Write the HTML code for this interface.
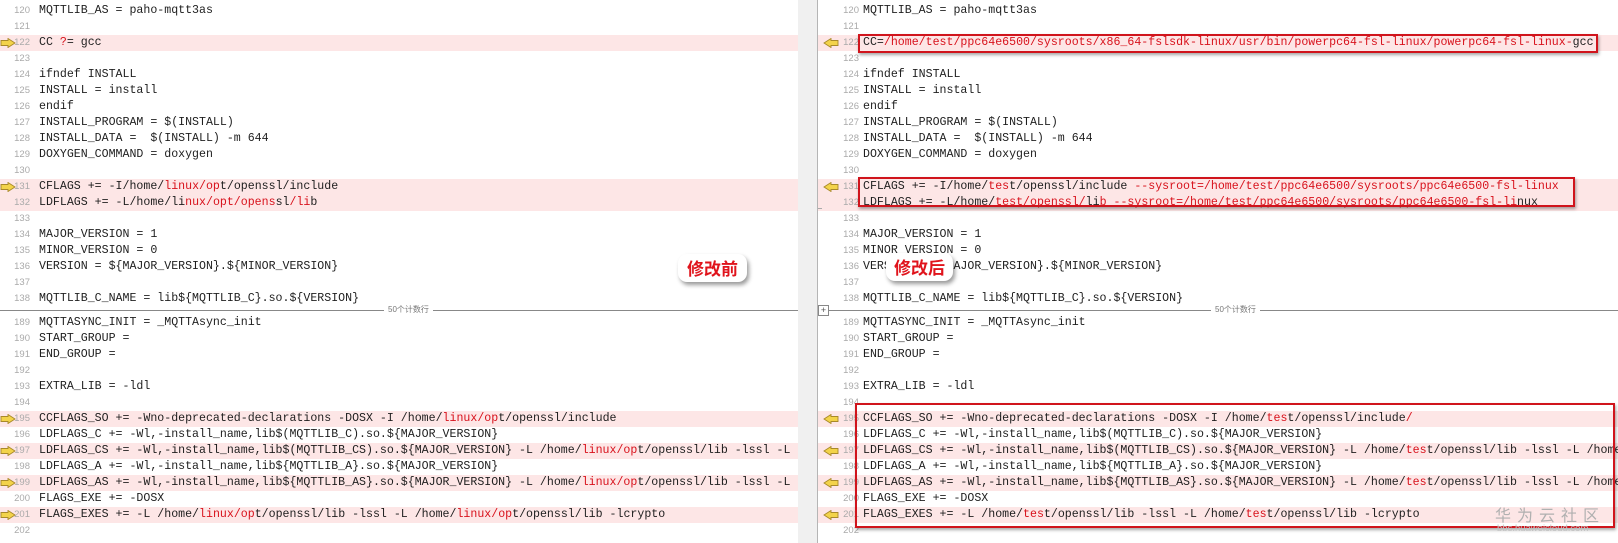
<!DOCTYPE html>
<html><head><meta charset="utf-8"><style>
body{margin:0;width:1618px;height:543px;overflow:hidden;background:#fff;position:relative;font-family:"Liberation Mono",monospace;}
.pane{position:absolute;top:0;height:543px;overflow:hidden;background:#fff}
.l{position:absolute;left:0;right:0;height:16px;line-height:16px;font-size:11.6px;color:#1e1e1e;white-space:pre}
.p{background:#fde6e6}
.n{position:absolute;width:26px;text-align:right;font-family:"Liberation Sans",sans-serif;font-size:9.5px;color:#aaa}
.t{position:absolute}
.r{color:#d8121c}
.ar{position:absolute;top:3px;width:16px;height:10px}
.sep{position:absolute;top:310px;left:0;right:0;border-top:1px solid #888}
.sept{position:absolute;top:303px;font-family:"Liberation Sans","Noto Sans CJK SC",sans-serif;font-size:8px;color:#777;background:#fff;padding:0 4px;line-height:14px}
.box{position:absolute;border:2px solid #d0141c;box-shadow:1px 2px 3px rgba(0,0,0,.35)}
.lab{position:absolute;background:#fff;border-radius:9px;box-shadow:2px 3px 4px rgba(0,0,0,.4);color:#e0141c;font-family:"Noto Sans CJK SC",sans-serif;font-weight:bold;font-size:17px;text-align:center;line-height:28px}
</style></head><body>
<div class="pane" id="L" style="left:0;width:798px"></div>
<div style="position:absolute;left:798px;top:0;width:20px;height:543px;background:#f0f0f0"></div>
<div style="position:absolute;left:817px;top:0;width:1px;height:543px;background:#b5b5b5"></div>
<div class="pane" id="R" style="left:818px;width:800px"></div>
<div style="position:absolute;left:818px;top:305px;width:9px;height:9px;border:1px solid #888;background:#fff;font:9px/9px 'Liberation Sans';text-align:center;color:#555">+</div>
<div class="box" style="left:858px;top:34px;width:736px;height:15px"></div>
<div class="box" style="left:858px;top:177px;width:713px;height:26px"></div>
<div class="box" style="left:855px;top:403px;width:756px;height:121px"></div>
<div class="lab" style="left:678px;top:254px;width:69px;height:28px">修改前</div>
<div class="lab" style="left:886px;top:253px;width:67px;height:28px">修改后</div>
<div style="position:absolute;left:1495px;top:502px;font-family:'Noto Sans CJK SC',sans-serif;font-size:16px;letter-spacing:6px;color:#b0b0b0">华为云社区</div>
<div style="position:absolute;left:1497px;top:523px;font-family:'Liberation Sans',sans-serif;font-size:9.5px;color:#c0c0c0">bbs.huaweicloud.com</div>
<script>
const top1=l=>l<=138?3+(l-120)*16:315+(l-189)*16;
const A=[
[120,0,"MQTTLIB_AS = paho-mqtt3as"],[121,0,""],[122,1,"CC [?]= gcc"],[123,0,""],[124,0,"ifndef INSTALL"],[125,0,"INSTALL = install"],[126,0,"endif"],[127,0,"INSTALL_PROGRAM = $(INSTALL)"],[128,0,"INSTALL_DATA =  $(INSTALL) -m 644"],[129,0,"DOXYGEN_COMMAND = doxygen"],[130,0,""],[131,1,"CFLAGS += -I/home/[linux/op]t/openssl/include"],[132,2,"LDFLAGS += -L/home/li[nux/opt/opens]sl[/li]b"],[133,0,""],[134,0,"MAJOR_VERSION = 1"],[135,0,"MINOR_VERSION = 0"],[136,0,"VERSION = ${MAJOR_VERSION}.${MINOR_VERSION}"],[137,0,""],[138,0,"MQTTLIB_C_NAME = lib${MQTTLIB_C}.so.${VERSION}"],
[189,0,"MQTTASYNC_INIT = _MQTTAsync_init"],[190,0,"START_GROUP ="],[191,0,"END_GROUP ="],[192,0,""],[193,0,"EXTRA_LIB = -ldl"],[194,0,""],
[195,1,"CCFLAGS_SO += -Wno-deprecated-declarations -DOSX -I /home/[linux/op]t/openssl/include"],
[196,0,"LDFLAGS_C += -Wl,-install_name,lib$(MQTTLIB_C).so.${MAJOR_VERSION}"],
[197,1,"LDFLAGS_CS += -Wl,-install_name,lib$(MQTTLIB_CS).so.${MAJOR_VERSION} -L /home/[linux/op]t/openssl/lib -lssl -L /home/[linux/op]t/openssl/lib"],
[198,0,"LDFLAGS_A += -Wl,-install_name,lib${MQTTLIB_A}.so.${MAJOR_VERSION}"],
[199,1,"LDFLAGS_AS += -Wl,-install_name,lib${MQTTLIB_AS}.so.${MAJOR_VERSION} -L /home/[linux/op]t/openssl/lib -lssl -L /home/[linux/op]t/openssl/lib"],
[200,0,"FLAGS_EXE += -DOSX"],
[201,1,"FLAGS_EXES += -L /home/[linux/op]t/openssl/lib -lssl -L /home/[linux/op]t/openssl/lib -lcrypto"],[202,0,""]];
const B=A.map(x=>x.slice());
const rep={122:"CC=[/home/test/ppc64e6500/sysroots/x86_64-fslsdk-linux/usr/bin/powerpc64-fsl-linux/powerpc64-fsl-linux-]gcc",
131:"CFLAGS += -I/home/[tes]t/openssl/include[ --sysroot=/home/test/ppc64e6500/sysroots/ppc64e6500-fsl-linux]",
132:"LDFLAGS += -L/home/[test/openssl/]li[b --sysroot=/home/test/ppc64e6500/sysroots/ppc64e6500-fsl-li]nux",
195:"CCFLAGS_SO += -Wno-deprecated-declarations -DOSX -I /home/[tes]t/openssl/include[/]",
197:"LDFLAGS_CS += -Wl,-install_name,lib$(MQTTLIB_CS).so.${MAJOR_VERSION} -L /home/[tes]t/openssl/lib -lssl -L /home/[tes]t/openssl/lib",
199:"LDFLAGS_AS += -Wl,-install_name,lib${MQTTLIB_AS}.so.${MAJOR_VERSION} -L /home/[tes]t/openssl/lib -lssl -L /home/[tes]t/openssl/lib",
201:"FLAGS_EXES += -L /home/[tes]t/openssl/lib -lssl -L /home/[tes]t/openssl/lib -lcrypto"};
B.forEach(x=>{if(rep[x[0]])x[2]=rep[x[0]];});
const esc=s=>s.replace(/&/g,"&amp;").replace(/</g,"&lt;");
const fmt=s=>esc(s).replace(/\[([^\]]*)\]/g,'<span class="r">$1</span>');
const arrR='<svg class="ar" style="left:0" viewBox="0 0 16 10"><path d="M1 2.5H8V0.5L15 5L8 9.5V7.5H1Z" fill="#f3d34a" stroke="#a8892a" stroke-width="0.9"/></svg>';
const arrL='<svg class="ar" style="left:5px" viewBox="0 0 16 10"><path d="M15 2.5H8V0.5L1 5L8 9.5V7.5H15Z" fill="#f3d34a" stroke="#a8892a" stroke-width="0.9"/></svg>';
function build(id,data,nx,tx,arr){let h='';data.forEach(([n,p,s])=>{h+=`<div class="l${p?' p':''}" style="top:${top1(n)}px">${p==1?arr:''}${p==2?`<div style="position:absolute;left:${nx-16}px;top:2px;width:4px;height:11px;border-left:1px solid #aaa;border-bottom:1px solid #aaa"></div>`:''}<span class="n" style="left:${nx}px">${n}</span><span class="t" style="left:${tx}px">${fmt(s)}</span></div>`;});
h+='<div class="sep"></div>';document.getElementById(id).innerHTML=h;}
build('L',A,4,39,arrR);build('R',B,15,45,arrL);
document.getElementById('L').insertAdjacentHTML('beforeend','<div class="sept" style="left:384px">50个计数行</div>');
document.getElementById('R').insertAdjacentHTML('beforeend','<div class="sept" style="left:393px">50个计数行</div>');
</script>
</body></html>
